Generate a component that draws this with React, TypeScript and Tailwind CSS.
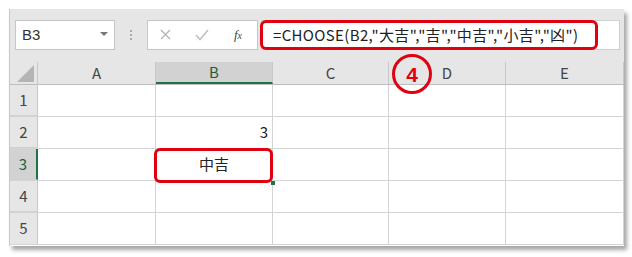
const font = "font-['Noto_Sans_CJK_JP','Noto_Sans',sans-serif]";

const cols = ["A", "B", "C", "D", "E"];
const colWidths = ["w-[118px]", "w-[117px]", "w-[116px]", "w-[117px]", "w-[118px]"];

function Cell({ w, children, right }: { w: string; children?: React.ReactNode; right?: boolean }) {
  return (
    <div
      className={`${w} h-full shrink-0 border-r border-[#d4d4d4] flex items-center ${
        right ? "justify-end pr-[4px]" : "justify-center"
      } text-[15px] text-[#222]`}
    >
      {children}
    </div>
  );
}

export default function App() {
  const rows: Record<number, Record<string, string>> = {
    2: { B: "3" },
    3: { B: "中吉" },
  };

  return (
    <div className={`w-[632px] h-[257px] bg-white pt-[9px] pl-[9px] ${font}`}>
      <div className="relative w-[615px] h-[237px] bg-white border-l border-[#c8c8c8] shadow-[3px_4px_4px_rgba(0,0,0,0.35)]">
        {/* formula bar */}
        <div className="h-[53px] bg-[#e6e6e6] flex items-start pt-[11px] pl-[5px] pr-[4px]">
          <div className="w-[100px] h-[30px] bg-white border border-[#c6c6c6] flex items-center pl-[6px] pr-[6px] justify-between">
            <span className="text-[15px] text-[#333] font-['Liberation_Sans',sans-serif]">B3</span>
            <span className="w-0 h-0 border-l-[4px] border-r-[4px] border-t-[4px] border-l-transparent border-r-transparent border-t-[#777] mb-[2px]" />
          </div>
          <div className="w-[32px] h-[30px] flex flex-col items-center justify-center gap-[2px]">
            <span className="w-[2px] h-[2px] bg-[#aaa]" />
            <span className="w-[2px] h-[2px] bg-[#aaa]" />
            <span className="w-[2px] h-[2px] bg-[#aaa]" />
          </div>
          <div className="w-[111px] h-[30px] bg-white border border-[#c6c6c6] flex items-center">
            <svg width="36" height="30" viewBox="0 0 36 30" className="shrink-0">
              <path d="M13 10 L22 19 M22 10 L13 19" stroke="#b5b5b5" strokeWidth="1.4" fill="none" />
            </svg>
            <svg width="36" height="30" viewBox="0 0 36 30" className="shrink-0">
              <path d="M12 15 L16 19.5 L24 10" stroke="#c0c0c0" strokeWidth="1.6" fill="none" />
            </svg>
            <span className="w-[36px] text-center text-[13px] italic text-[#444] font-['Liberation_Serif',serif]">
              f<span className="text-[10px]">x</span>
            </span>
          </div>
          <div className="flex-1 h-[30px] bg-white border border-[#d0d0d0] ml-[3px] flex items-center pl-[11px] text-[15px] tracking-[0.35px] text-[#222]">
            =CHOOSE(B2,"大吉","吉","中吉","小吉","凶")
          </div>
        </div>

        {/* column headers */}
        <div className="flex h-[23px] bg-[#e6e6e6] border-b border-[#bdbdbd]">
          <div className="w-[28px] h-full shrink-0 border-r border-[#c8c8c8] relative">
            <svg width="17" height="17" viewBox="0 0 16 16" className="absolute right-[3px] bottom-[2px]">
              <path d="M16 0 L16 16 L0 16 Z" fill="#b4b4b4" />
            </svg>
          </div>
          {cols.map((c, i) => (
            <div
              key={c}
              className={`${colWidths[i]} h-full shrink-0 border-r border-[#c8c8c8] flex items-center justify-center text-[15px] ${
                c === "B" ? "bg-[#d2d2d2] text-[#1e5e38] border-b-2 border-b-[#217346]" : "text-[#444]"
              }`}
            >
              {c}
            </div>
          ))}
        </div>

        {/* rows */}
        {[1, 2, 3, 4, 5].map((r) => (
          <div key={r} className="flex h-[32px] border-b border-[#d4d4d4]">
            <div
              className={`w-[28px] h-full shrink-0 flex items-center justify-center text-[15px] border-r ${
                r === 3
                  ? "bg-[#d2d2d2] text-[#1e5e38] border-r-2 border-r-[#217346]"
                  : "bg-[#e6e6e6] text-[#444] border-[#c8c8c8]"
              } ${r === 5 ? "" : "border-b border-b-[#d0d0d0]"}`}
            >
              {r}
            </div>
            {cols.map((c, i) => (
              <Cell key={c} w={colWidths[i]} right={r === 2}>
                {rows[r]?.[c]}
              </Cell>
            ))}
          </div>
        ))}

        {/* annotations */}
        <div className="absolute left-[250px] top-[11px] w-[338px] h-[30px] border-[3px] border-[#e0000f] rounded-[6px]" />
        <div className="absolute left-[144px] top-[139px] w-[119px] h-[35px] border-[3px] border-[#e0000f] rounded-[6px]" />
        <div className="absolute left-[261px] top-[172px] w-[4px] h-[4px] bg-[#217346]" />
        <div className="absolute left-[382px] top-[45px] w-[40px] h-[40px] rounded-full border-[3px] border-[#e0000f] bg-transparent flex items-center justify-center">
          <span className="text-[21px] font-bold text-[#e0000f] font-['Liberation_Sans',sans-serif] leading-none">4</span>
        </div>
      </div>
    </div>
  );
}
